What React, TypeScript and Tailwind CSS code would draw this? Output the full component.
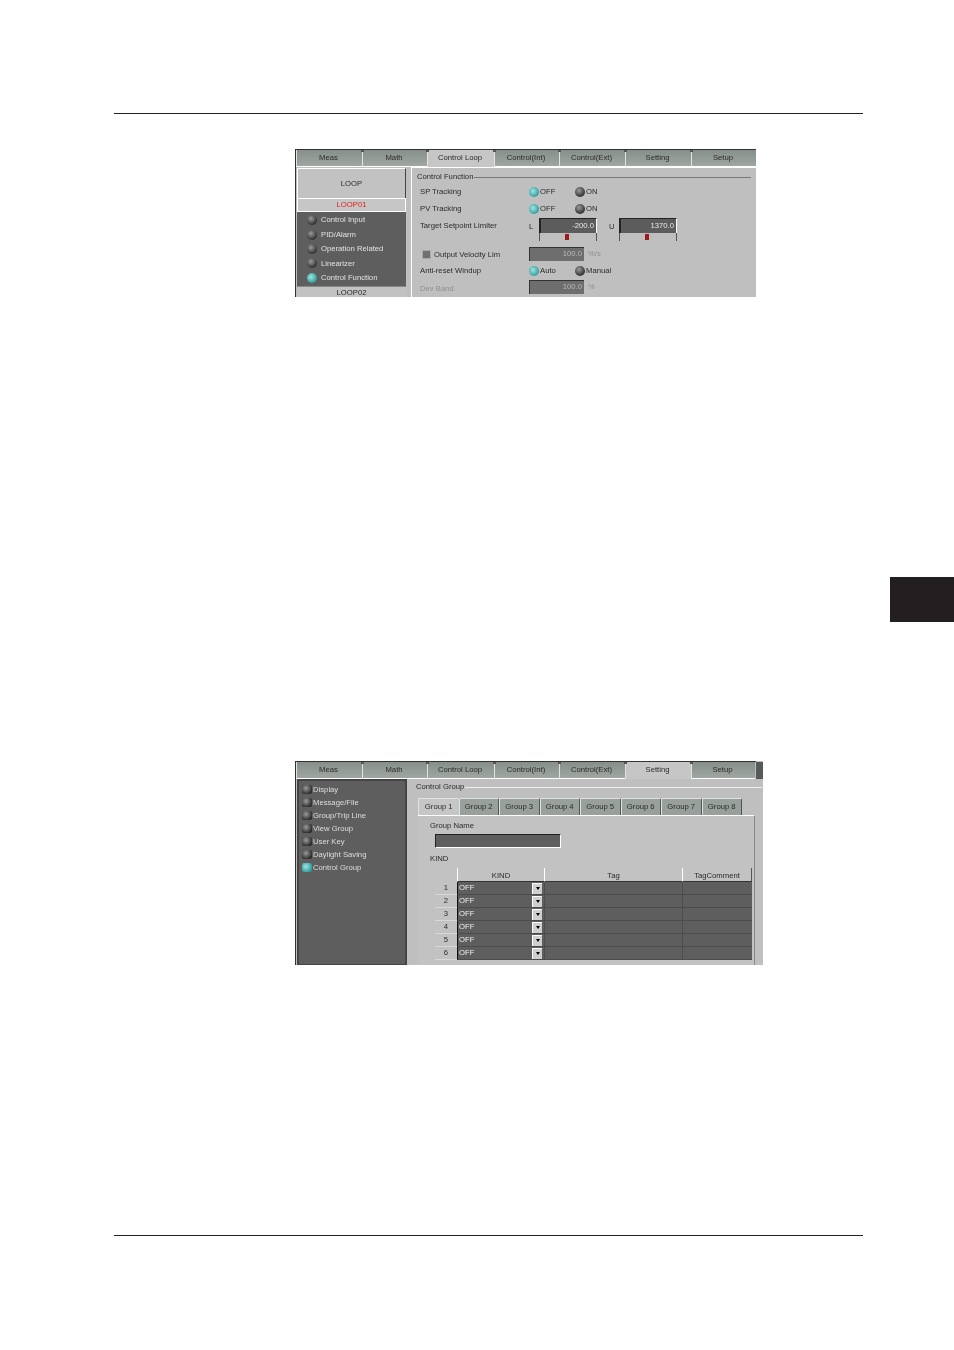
const mainTabs = ['Meas', 'Math', 'Control Loop', 'Control(Int)', 'Control(Ext)', 'Setting', 'Setup']
const loopItems = ['Control Input', 'PID/Alarm', 'Operation Related', 'Linearizer', 'Control Function']
const settingItems = ['Display', 'Message/File', 'Group/Trip Line', 'View Group', 'User Key', 'Daylight Saving', 'Control Group']
const groups = ['Group 1', 'Group 2', 'Group 3', 'Group 4', 'Group 5', 'Group 6', 'Group 7', 'Group 8']
const rows = [1, 2, 3, 4, 5, 6]

function Led({ on, square }: { on?: boolean; square?: boolean }) {
  return (
    <span
      className={`inline-block shrink-0 ${square ? 'h-[9px] w-[10px] rounded-[2px]' : 'h-[10px] w-[10px] rounded-full'} ${
        on
          ? 'bg-[radial-gradient(circle_at_40%_40%,#9fe6e2,#2f9a9c_75%)]'
          : 'bg-[radial-gradient(circle_at_40%_35%,#9a9a9a,#2b2b2b_75%)]'
      }`}
    />
  )
}

function MainTabs({ active, widths }: { active: number; widths: number[] }) {
  return (
    <div className="flex h-[18px] items-stretch border-t border-[#333]">
      {mainTabs.map((t, i) => (
        <div
          key={t}
          style={{ width: widths[i] }}
          className={`relative flex items-center justify-center border-b border-l border-[#e2e2e2] pr-[2px] ${
            i === active ? 'border-b-[#c6c6c6] bg-[#c6c6c6]' : 'border-b-white bg-[linear-gradient(#858f89,#a0a6a2)]'
          }`}
        >
          {i > 0 && <span className="absolute -left-[2px] top-0 h-[2px] w-[3px] bg-[#555]" />}
          {t}
        </div>
      ))}
    </div>
  )
}

function Radio({ on, label, className }: { on?: boolean; label: string; className: string }) {
  return (
    <div className={`flex items-center gap-[1px] ${className}`}>
      <Led on={on} />
      <span>{label}</span>
    </div>
  )
}

function FormRow({ label, dim, children }: { label: string; dim?: boolean; children?: React.ReactNode }) {
  return (
    <div className="flex h-[17px] items-center pb-[2px]">
      <div className={`w-[109px] ${dim ? 'pt-[2px] text-[#8f8f8f]' : ''}`}>{label}</div>
      {children}
    </div>
  )
}

function Slider({ label, value, left }: { label: string; value: string; left: string }) {
  return (
    <div className="flex items-start">
      <span className="w-[10px] pt-[5px]">{label}</span>
      <div className="w-[58px]">
        <div className="flex h-[15px] items-center justify-end border-l-2 border-t border-[#222] border-r-white border-r bg-[#5c5c5c] pr-[2px] text-[#e8e8e8]">
          {value}
        </div>
        <div className="flex h-[8px] border-l border-r border-[#555]">
          <span className={`${left} mt-[1px] h-[6px] w-[4px] bg-[#a01818]`} />
        </div>
      </div>
    </div>
  )
}

function DimBox({ value, unit }: { value: string; unit: string }) {
  return (
    <div className="-mt-[2px] flex items-center">
      <div className="flex h-[14px] w-[55px] items-center justify-end border-l border-t border-[#333] bg-[#6e6e6e] pr-[2px] text-[#b9b9b9]">
        {value}
      </div>
      <span className="ml-[4px] text-[#8f8f8f]">{unit}</span>
    </div>
  )
}

function LoopScreen() {
  return (
    <div className="ml-[295px] mt-[35px] h-[148px] w-[461px] overflow-hidden border-l border-[#333] bg-[#bfbfbf]">
      <MainTabs active={2} widths={[66, 65, 67, 65, 66, 66, 65]} />
      <div className="flex">
        <div className="ml-px mt-px w-[109px] shrink-0">
          <div className="flex h-[30px] items-center justify-center border-l border-t border-white border-r-[#444] border-r bg-[#c2c2c2]">LOOP</div>
          <div className="flex h-[14px] items-center justify-center border border-white bg-[#c6c6c6] text-[#e0201c]">LOOP01</div>
          <div className="flex h-[74px] flex-col justify-around bg-[#5e5e5e] py-px pl-[10px] text-[#e2e2e2]">
            {loopItems.map((item, i) => (
              <div key={item} className="flex items-center gap-[4px]">
                <Led on={i === 4} />
                <span>{item}</span>
              </div>
            ))}
          </div>
          <div className="flex h-[12px] items-center justify-center border-t border-[#888] bg-[#c2c2c2]">LOOP02</div>
        </div>
        <div className="ml-[5px] min-w-0 flex-1 border-l border-t border-white">
          <div className="flex h-[16px] items-center pl-[5px] pr-[5px] pt-[2px]">
            <span className="pr-px">Control Function</span>
            <span className="h-px flex-1 bg-[#777]" />
          </div>
          <div className="pl-[8px]">
            <FormRow label="SP Tracking">
              <Radio on label="OFF" className="w-[46px]" />
              <Radio label="ON" className="" />
            </FormRow>
            <FormRow label="PV Tracking">
              <Radio on label="OFF" className="w-[46px]" />
              <Radio label="ON" className="" />
            </FormRow>
            <div className="flex h-[28px] items-start">
              <div className="w-[109px] pt-[4px]">Target Setpoint Limiter</div>
              <Slider label="L" value="-200.0" left="ml-[25px]" />
              <div className="w-[12px]" />
              <Slider label="U" value="1370.0" left="ml-[25px]" />
            </div>
            <div className="flex h-[17px] items-center">
              <span className="ml-[2px] h-[9px] w-[9px] border border-[#aaa] bg-[#707070]" />
              <span className="ml-[3px] w-[95px]">Output Velocity Lim</span>
              <DimBox value="100.0" unit="%/s" />
            </div>
            <FormRow label="Anti-reset Windup">
              <Radio on label="Auto" className="w-[46px]" />
              <Radio label="Manual" className="" />
            </FormRow>
            <FormRow label="Dev Band" dim>
              <DimBox value="100.0" unit="%" />
            </FormRow>
          </div>
        </div>
      </div>
    </div>
  )
}

function GroupScreen() {
  return (
    <div className="ml-[295px] mt-[139px] h-[204px] w-[468px] overflow-hidden border-l border-[#333] bg-[#bfbfbf]">
      <div className="flex">
        <div className="min-w-0 flex-1">
          <MainTabs active={5} widths={[66, 65, 67, 65, 66, 66, 64]} />
        </div>
        <div className="mt-px h-[17px] w-[7px] bg-[#565a58]" />
      </div>
      <div className="flex">
        <div className="ml-px h-[187px] w-[110px] shrink-0 border-2 border-[#444] bg-[#5e5e5e] px-[3px] pt-[2px] text-[#dedede]">
          {settingItems.map((item, i) => (
            <div key={item} className="flex h-[13px] items-center gap-[1px]">
              <Led square on={i === 6} />
              <span>{item}</span>
            </div>
          ))}
        </div>
        <div className="ml-[4px] min-w-0 flex-1 pr-[1px] pt-[3px]">
          <div className="flex h-[10px] items-center pl-[5px]">
            <span className="pr-px">Control Group</span>
            <span className="h-px flex-1 bg-[#eee]" />
          </div>
          <div className="ml-[7px] mr-[7px] mt-[6px]">
            <div className="flex h-[17px]">
              {groups.map((g, i) => (
                <div
                  key={g}
                  className={`flex h-full w-[40.5px] items-center justify-center rounded-t-[2px] border-l border-t border-[#e2e2e2] ${
                    i === 0 ? 'bg-[#c6c6c6]' : 'border-r border-r-[#555] bg-[#98a09b]'
                  }`}
                >
                  {g}
                </div>
              ))}
            </div>
            <div className="h-[150px] border-r border-t border-r-[#888] border-t-white bg-[#c2c2c2] pl-[12px] pt-[4px]">
              <div className="h-[12px] leading-[12px]">Group Name</div>
              <div className="ml-[5px] mt-[2px] h-[14px] w-[126px] border-b border-l border-r border-t border-[#222] border-b-white border-r-white bg-[#5e5e5e]" />
              <div className="mt-[5px] h-[12px] leading-[12px]">KIND</div>
              <div className="ml-[5px] mt-[3px] w-[317px] text-center">
                <div className="flex h-[14px] items-center">
                  <div className="h-full w-[22px]" />
                  <div className="flex h-full w-[87px] items-center justify-center border-b border-l border-[#333] border-l-white pt-[2px]">KIND</div>
                  <div className="flex h-full w-[138px] items-center justify-center border-b border-l border-[#333] border-l-white pt-[2px]">Tag</div>
                  <div className="flex h-full w-[70px] items-center justify-center border-b border-l border-r border-[#333] border-l-white border-r-[#555] pt-[2px]">TagComment</div>
                </div>
                {rows.map((n) => (
                  <div key={n} className="flex h-[13px]">
                    <div className="flex w-[22px] items-center justify-center border-b border-[#d8d8d8]">{n}</div>
                    <div className="flex w-[87px] items-center border-b border-l border-[#4c4c4c] border-l-[#111] bg-[#5e5e5e] pl-[1px] pr-[2px] text-[#eee]">
                      <span className="flex-1 text-left">OFF</span>
                      <span className="flex h-[11px] w-[10px] items-center justify-center border-l border-t border-white bg-[#cfcfcf]">
                        <span className="h-0 w-0 border-x-[2.5px] border-t-[3px] border-x-transparent border-t-black" />
                      </span>
                    </div>
                    <div className="w-[138px] border-b border-l border-[#4c4c4c] bg-[#5e5e5e]" />
                    <div className="w-[70px] border-b border-l border-[#4c4c4c] bg-[#5e5e5e]" />
                  </div>
                ))}
              </div>
            </div>
          </div>
        </div>
      </div>
    </div>
  )
}

export default function App() {
  return (
    <div className="flex h-[1350px] w-[954px] flex-col overflow-hidden bg-white font-['Liberation_Sans',Arial,sans-serif] text-[7.7px] leading-none text-[#2a2a2a]">
      <div className="ml-[114px] mt-[113px] h-px w-[749px] shrink-0 bg-[#222]" />
      <div className="shrink-0 blur-[0.3px]">
        <LoopScreen />
      </div>
      <div className="ml-auto mt-[280px] h-[45px] w-[64px] shrink-0 bg-[#231f20]" />
      <div className="shrink-0 blur-[0.3px]">
        <GroupScreen />
      </div>
      <div className="ml-[114px] mt-[270px] h-px w-[749px] shrink-0 bg-[#222]" />
    </div>
  )
}
